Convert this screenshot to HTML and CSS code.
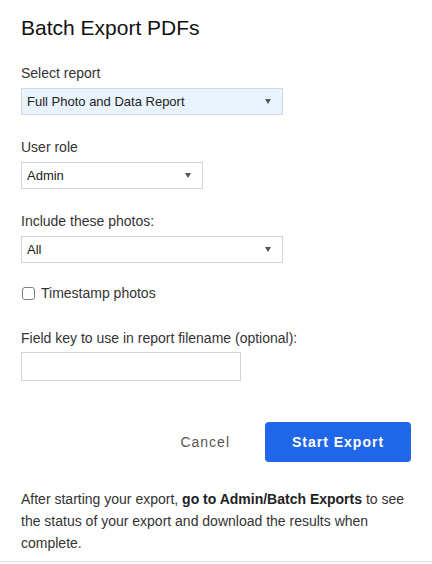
FILE: index.html
```html
<!DOCTYPE html>
<html>
<head>
<meta charset="utf-8">
<link rel="stylesheet" href="styles.css">
</head>
<body>
<div class="dialog">
  <h1 class="title">Batch Export PDFs</h1>

  <div class="field field-first">
    <div class="label">Select report</div>
    <div class="select select-wide select-active">
      <span class="select-text">Full Photo and Data Report</span>
      <svg class="arrow" width="6" height="5" viewBox="0 0 6 5"><path d="M0 0 L6 0 L3 5 Z" fill="#555"/></svg>
    </div>
  </div>

  <div class="field">
    <div class="label">User role</div>
    <div class="select select-narrow">
      <span class="select-text">Admin</span>
      <svg class="arrow" width="6" height="5" viewBox="0 0 6 5"><path d="M0 0 L6 0 L3 5 Z" fill="#555"/></svg>
    </div>
  </div>

  <div class="field">
    <div class="label">Include these photos:</div>
    <div class="select select-wide">
      <span class="select-text">All</span>
      <svg class="arrow" width="6" height="5" viewBox="0 0 6 5"><path d="M0 0 L6 0 L3 5 Z" fill="#555"/></svg>
    </div>
  </div>

  <label class="check-row">
    <span class="checkbox"></span>
    <span class="check-text">Timestamp photos</span>
  </label>

  <div class="field field-key">
    <div class="label">Field key to use in report filename (optional):</div>
    <div class="text-input"></div>
  </div>

  <div class="actions">
    <span class="btn-cancel">Cancel</span>
    <span class="btn-primary">Start Export</span>
  </div>

  <p class="note"><span>After starting your export,</span> <b>go to Admin/Batch Exports</b> <span>to see</span> <span>the status of your export and download the results when</span> <span>complete.</span></p>
</div>
</body>
</html>
```

FILE: styles.css
```css
html, body {
  margin: 0;
  padding: 0;
  background: #fff;
}
body {
  font-family: "Liberation Sans", Arial, Helvetica, sans-serif;
  color: #333;
  width: 432px;
}
.dialog {
  padding: 16px 21px 0 21px;
  border-bottom: 1px solid #dcdcdc;
  box-sizing: border-box;
  height: 562px;
}
.title {
  margin: 0;
  font-size: 21px;
  line-height: 24px;
  font-weight: normal;
  color: #111;
}
.field {
  display: flex;
  flex-direction: column;
  align-items: flex-start;
  margin-top: 23px;
}
.field-first {
  margin-top: 24px;
}
.label {
  font-size: 14px;
  line-height: 18px;
  color: #333;
  margin-bottom: 6px;
}
.select {
  box-sizing: border-box;
  height: 27px;
  border: 1px solid #d4d4d4;
  background: #fff;
  display: flex;
  align-items: center;
  justify-content: space-between;
  padding: 0 11px 0 5px;
}
.select-wide { width: 262px; }
.select-narrow { width: 182px; }
.select-active {
  background: #e9f3fd;
  border-color: #d2dbe4;
}
.select-text {
  font-size: 13px;
  color: #222;
}
.arrow { display: block; }
.check-row {
  display: flex;
  align-items: center;
  gap: 6px;
  margin-top: 21px;
  height: 18px;
  margin-left: 1px;
}
.checkbox {
  width: 11px;
  height: 11px;
  border: 1px solid #808080;
  border-radius: 3px;
  background: #fff;
  box-sizing: content-box;
}
.check-text {
  font-size: 14px;
  line-height: 18px;
  color: #333;
}
.field-key {
  margin-top: 27px;
}
.field-key .label {
  margin-bottom: 5px;
}
.text-input {
  box-sizing: border-box;
  width: 220px;
  height: 29px;
  border: 1px solid #d4d4d4;
  background: #fff;
}
.actions {
  display: flex;
  justify-content: flex-end;
  align-items: center;
  margin-top: 41px;
  gap: 35px;
}
.btn-cancel {
  font-size: 14px;
  letter-spacing: 1px;
  color: #555;
}
.btn-primary {
  box-sizing: border-box;
  width: 146px;
  height: 40px;
  border-radius: 4px;
  background: #1f66e8;
  color: #fff;
  font-size: 14px;
  font-weight: bold;
  letter-spacing: 1px;
  display: flex;
  align-items: center;
  justify-content: center;
}
.note {
  margin: 26px 0 0 0;
  font-size: 14px;
  line-height: 22px;
  color: #333;
}
.note b {
  color: #222;
}
```
